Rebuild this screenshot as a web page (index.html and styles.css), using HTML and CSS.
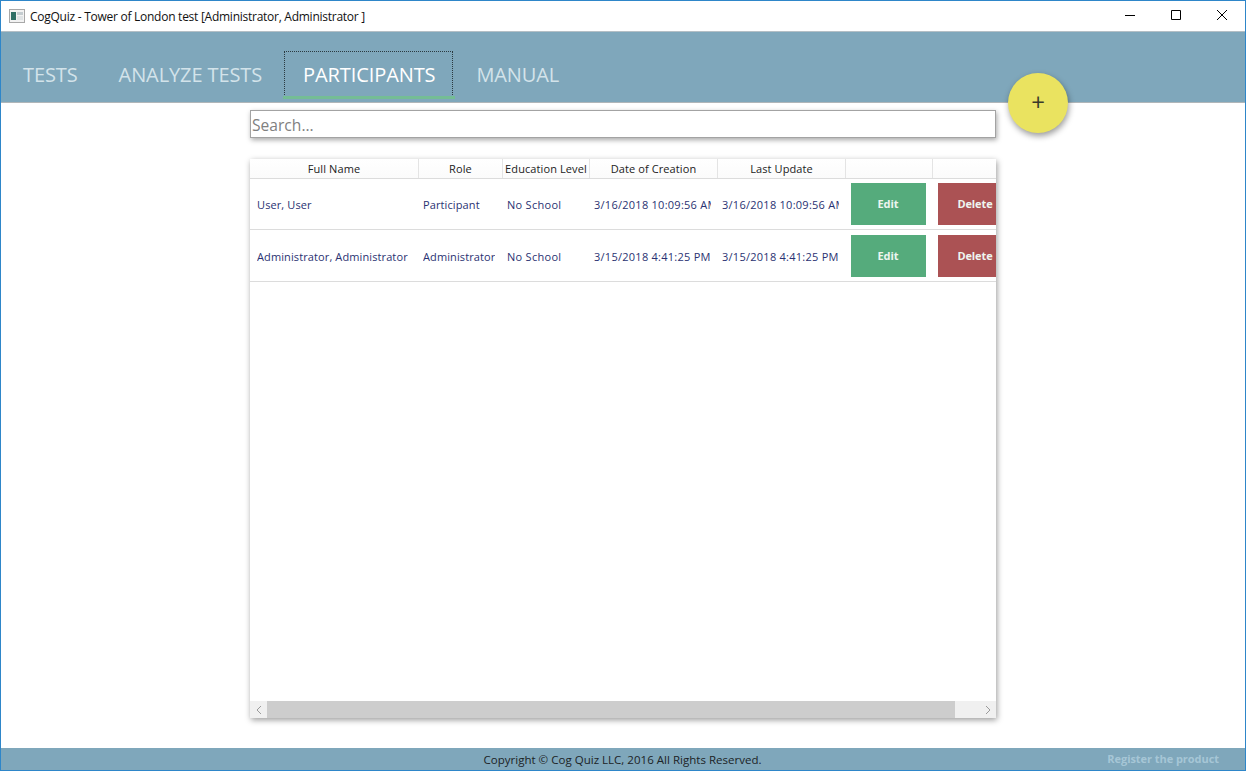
FILE: index.html
```html
<!DOCTYPE html>
<html lang="en">
<head>
  <meta charset="UTF-8"/>
  <title>CogQuiz - Tower of London test</title>
  <link rel="stylesheet" href="styles.css">
</head>
<body>
  <div class="window">
    <header class="titlebar">
      <svg class="app-icon" width="16" height="16" viewBox="0 0 16 16">
        <rect x="0.5" y="1.5" width="15" height="13" fill="#f2f2f2" stroke="#a8a8a8"/>
        <rect x="2" y="4" width="5" height="8" fill="#2f6f66"/>
        <rect x="8" y="4" width="6" height="3" fill="#c4ccd0"/>
        <rect x="8" y="8" width="6" height="4" fill="#dfe3e5"/>
      </svg>
      <span class="title">CogQuiz - Tower of London test [Administrator, Administrator ]</span>
      <div class="win-controls">
        <button class="win-btn"><svg width="12" height="12" viewBox="0 0 12 12"><path d="M1 6.5h10" stroke="#000" fill="none"/></svg></button>
        <button class="win-btn"><svg width="12" height="12" viewBox="0 0 12 12"><path d="M1.5 1.5h9v9h-9z" stroke="#000" fill="none"/></svg></button>
        <button class="win-btn"><svg width="12" height="12" viewBox="0 0 12 12"><path d="M1 1l10 10M11 1L1 11" stroke="#000" fill="none"/></svg></button>
      </div>
    </header>

    <nav class="appbar">
      <a class="tab">TESTS</a>
      <a class="tab">ANALYZE TESTS</a>
      <a class="tab active">PARTICIPANTS</a>
      <a class="tab">MANUAL</a>
    </nav>
    <button class="fab">+</button>

    <main class="content">
      <input class="search" type="text" placeholder="Search..."/>

      <section class="card">
        <div class="thead cols">
          <div>Full Name</div>
          <div>Role</div>
          <div>Education Level</div>
          <div>Date of Creation</div>
          <div>Last Update</div>
          <div></div>
          <div></div>
        </div>
        <div class="tbody">
          <div class="row cols">
            <div class="cell"><span class="txt">User, User</span></div>
            <div class="cell"><span class="txt">Participant</span></div>
            <div class="cell school"><span class="txt">No School</span></div>
            <div class="cell date"><span class="txt">3/16/2018 10:09:56 AM</span></div>
            <div class="cell date"><span class="txt">3/16/2018 10:09:56 AM</span></div>
            <div class="cell"><button class="btn edit">Edit</button></div>
            <div class="cell"><button class="btn del">Delete</button></div>
          </div>
          <div class="row cols">
            <div class="cell"><span class="txt">Administrator, Administrator</span></div>
            <div class="cell"><span class="txt">Administrator</span></div>
            <div class="cell school"><span class="txt">No School</span></div>
            <div class="cell date"><span class="txt">3/15/2018 4:41:25 PM</span></div>
            <div class="cell date"><span class="txt">3/15/2018 4:41:25 PM</span></div>
            <div class="cell"><button class="btn edit">Edit</button></div>
            <div class="cell"><button class="btn del">Delete</button></div>
          </div>
        </div>
        <div class="hscroll">
          <span class="arrow"><svg width="8" height="10" viewBox="0 0 8 10"><path d="M6 1L2 5l4 4" stroke="#9a9a9a" fill="none"/></svg></span>
          <span class="thumb"></span>
          <span class="arrow wide"><svg width="8" height="10" viewBox="0 0 8 10"><path d="M2 1l4 4-4 4" stroke="#9a9a9a" fill="none"/></svg></span>
        </div>
      </section>
    </main>

    <footer class="footer">
      <span class="copy">Copyright © Cog Quiz LLC, 2016 All Rights Reserved.</span>
      <a class="register">Register the product</a>
    </footer>
  </div>
</body>
</html>
```

FILE: styles.css
```css
* { box-sizing: border-box; font-family: "Open Sans", "Noto Sans", sans-serif; }
html, body { margin: 0; height: 100%; overflow: hidden; background: #fff; }

.window {
  position: relative; height: 771px; display: flex; flex-direction: column;
  border: 1px solid #2e86c9; background: #fff;
}

/* title bar */
.titlebar { height: 30px; display: flex; align-items: center; padding-left: 8px; flex: none; }
.app-icon { flex: none; }
.title { margin-left: 5px; font-size: 12px; letter-spacing: -.26px; color: #111; }
.win-controls { margin-left: auto; display: flex; }
.win-btn {
  width: 46px; height: 30px; border: 0; background: none; padding: 0 0 2px;
  display: flex; align-items: center; justify-content: center;
}

/* tabs */
.appbar {
  height: 72px; flex: none; display: flex; align-items: flex-end; padding: 0 0 3px 3px;
  background: #7fa7bb; border-top: 1px solid #b4bfc5; border-bottom: 1px solid #b0b6b9;
}
.tab {
  position: relative; height: 48px; padding: 8px 17px 0 18px; margin-right: 4px;
  font-size: 20px; line-height: 30px; letter-spacing: -.1px; color: #d3e3ea;
  border: 1px solid transparent;
}
.tab.active { color: #fff; border: 1px dotted #2b3a40; }
.tab.active::after {
  content: ""; position: absolute; left: -2px; right: -3px; bottom: -1px; height: 3px; background: #74bd95;
}
.fab {
  position: absolute; left: 1007px; top: 72px; width: 60px; height: 60px; padding: 0 0 3px;
  border: 0; border-radius: 50%; background: #eae360; color: #3a3a2a;
  font-size: 24px; line-height: 1; box-shadow: 1px 3px 6px rgba(0,0,0,.4);
}

/* content */
.content { flex: 1; display: flex; flex-direction: column; padding: 7px 0 30px 249px; min-height: 0; }
.search {
  width: 746px; height: 28px; flex: none; padding: 2px 1px 0; font-size: 15.6px; color: #333;
  border: 1px solid #a3a3a3; outline: 0; box-shadow: 1px 2px 5px rgba(0,0,0,.35);
}
.search::placeholder { color: #808080; opacity: 1; }

.card {
  margin-top: 21px; width: 746px; flex: 1; min-height: 0; display: flex; flex-direction: column;
  background: #fff; box-shadow: 1px 2px 6px rgba(0,0,0,.4); overflow: hidden;
}
.cols { display: grid; grid-template-columns: 169px 84px 87px 128px 128px 87px 87px; width: 770px; }
.thead { height: 20px; flex: none; border-bottom: 1px solid #dcdcdc; font-size: 11px; letter-spacing: .1px; color: #222; }
.thead > div {
  text-align: center; line-height: 19px; border-right: 1px solid #e4e4e4;
  background: linear-gradient(#fff, #fbfbfb); white-space: nowrap;
}
.tbody { flex: 1; }
.row { height: 52px; border-bottom: 1px solid #dcdcdc; }
.row:first-child { height: 51px; }
.cell {
  display: flex; align-items: center; padding: 0 6px 0 7px; overflow: hidden; white-space: nowrap;
  font-size: 11px; letter-spacing: .11px; color: #2a3272;
}
.txt { overflow: hidden; min-width: 0; }
.row:nth-child(2) .txt { margin-top: 2px; }
.cell:nth-child(n+2) { padding-left: 4px; }
.cell.school { padding-left: 4px; letter-spacing: .28px; }
.cell.date { letter-spacing: .26px; padding-right: 7px; }
.cell:nth-child(n+6) { padding-left: 5px; padding-right: 0; }

.btn {
  width: 75px; height: 42px; border: 0; padding: 0 1px 1px 0; color: #eef5f0;
  font-size: 11px; font-weight: 700; letter-spacing: -.1px;
}
.edit { background: #55ab7c; }
.del { background: #ab5254; }

.hscroll { height: 17px; flex: none; display: flex; background: #f0f0f0; }
.arrow { width: 17px; display: flex; align-items: center; justify-content: center; }
.arrow.wide { width: 41px; justify-content: flex-end; padding-right: 4px; }
.thumb { flex: 1; background: #cdcdcd; }

/* footer */
.footer {
  position: relative; height: 22px; flex: none; display: flex; align-items: center; justify-content: center;
  background: #7fa7bb; font-size: 11.5px; color: #1c2326;
}
.copy { margin-right: 1px; letter-spacing: .02px; }
.register {
  position: absolute; right: 26px; top: 3px; font-weight: 700; font-size: 11px; letter-spacing: -.05px; color: #a6c6d6;
}
```
